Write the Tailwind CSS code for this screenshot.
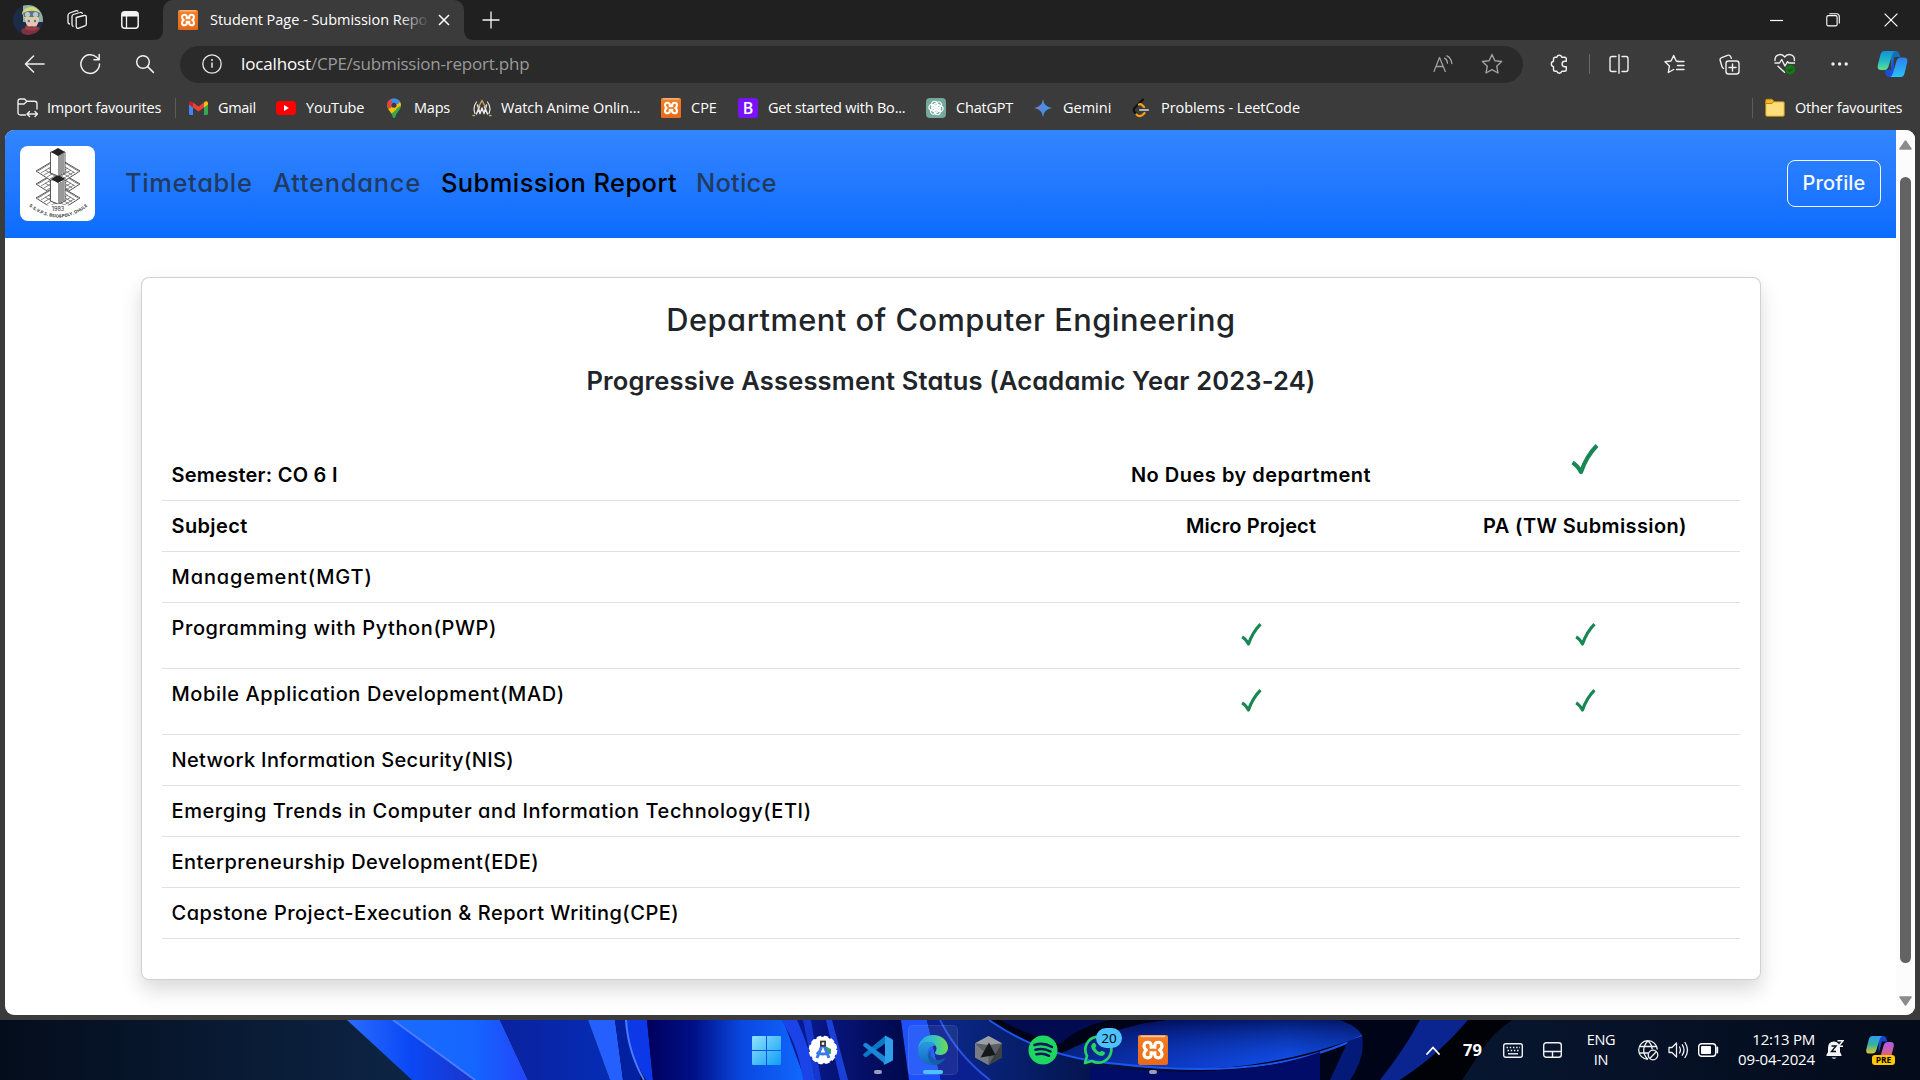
<!DOCTYPE html>
<html lang="en">
<head>
<meta charset="utf-8">
<title>Student Page - Submission Report</title>
<script src="https://cdn.jsdelivr.net/npm/@tailwindcss/browser@4"></script>
</head>
<body class="w-[1920px] h-[1080px] overflow-hidden bg-[#3b3b3b] font-['Open_Sans',sans-serif] text-[14.5px] text-white">

<svg class="absolute w-0 h-0">
  <defs>
    <linearGradient id="xg" x1="0" y1="0" x2="0" y2="1"><stop offset="0" stop-color="#f08a3c"/><stop offset=".2" stop-color="#f27a1e"/><stop offset="1" stop-color="#e8691a"/></linearGradient>
    <linearGradient id="gem" x1="0" y1="0" x2="1" y2="0"><stop offset="0" stop-color="#7f7fd0"/><stop offset=".5" stop-color="#4d8be0"/><stop offset="1" stop-color="#3a9bf0"/></linearGradient>
    <linearGradient id="cpA" x1="0" y1="0" x2="0" y2="1"><stop offset="0" stop-color="#1392d8"/><stop offset=".5" stop-color="#22b5c8"/><stop offset="1" stop-color="#5fe08a"/></linearGradient>
    <linearGradient id="cpB" x1="0" y1="0" x2="0" y2="1"><stop offset="0" stop-color="#2f7df5"/><stop offset="1" stop-color="#28c3f5"/></linearGradient>
    <linearGradient id="preA" x1="0" y1="0" x2="0" y2="1"><stop offset="0" stop-color="#2f9af0"/><stop offset=".5" stop-color="#35b49a"/><stop offset="1" stop-color="#e8c42a"/></linearGradient>
    <linearGradient id="preB" x1="0" y1="0" x2="0" y2="1"><stop offset="0" stop-color="#b05ce8"/><stop offset="1" stop-color="#f0605a"/></linearGradient>
    <linearGradient id="win" x1="0" y1="0" x2="29" y2="29" gradientUnits="userSpaceOnUse"><stop offset="0" stop-color="#8fe3fb"/><stop offset="1" stop-color="#0f9cf5"/></linearGradient>
    <linearGradient id="edA" x1="0" y1="0" x2="1" y2="0"><stop offset="0" stop-color="#2ba5e4"/><stop offset=".5" stop-color="#35c1c9"/><stop offset="1" stop-color="#6fdc4a"/></linearGradient>
    <linearGradient id="edB" x1="0" y1="0" x2="0" y2="1"><stop offset="0" stop-color="#2a9be0"/><stop offset="1" stop-color="#1268c0"/></linearGradient>
    <symbol id="xampp" viewBox="0 0 20 20"><rect width="20" height="20" rx="1.500" fill="url(#xg)"/><path d="M2 .9h16" stroke="#fbc79b" stroke-width="1"/><path d="M8.800 10V7.200Q8.800 4.800 6.500 4.800T4 7.100Q4 9 5.700 10 4 11 4 12.900q0 2.300 2.500 2.300t2.300-2.400zM11.200 10V7.200q0-2.400 2.300-2.400T16 7.100Q16 9 14.300 10q1.700 1 1.700 2.900 0 2.300-2.500 2.300t-2.300-2.400z" fill="#f27a1e" stroke="#fff" stroke-width="2.100" stroke-linejoin="round"/><path d="M7 10h6" stroke="#f27a1e" stroke-width="1.600"/><path d="M9 7.700h2M9 12.300h2" stroke="#fff" stroke-width="1.800"/></symbol>
    <symbol id="tick" viewBox="0 0 28 32"><path d="M1.500 18.500q4.500 2.500 8.500 9.500 5.500-16 16-26.500" fill="none" stroke="#198754" stroke-width="4.200" stroke-linejoin="round"/></symbol>
  </defs>
</svg>

<!-- Tab strip -->
<header class="flex h-[40px] bg-[#202020]">
  <div class="flex items-center w-[163px] pl-[13px]">
    <svg class="size-[30px]" viewBox="0 0 30 30"><clipPath id="av"><circle cx="15" cy="15" r="15"/></clipPath><g clip-path="url(#av)"><rect width="30" height="30" fill="#1c2b46"/><path d="M10 0h20v17H10z" fill="#8fb0a5"/><path d="M9 8c2-7 15-9 18 0l-2 5H11z" fill="#d5d878"/><path d="M10 8c6-3 12-3 17 0l-1 4H11z" fill="#5b7587"/><circle cx="14.500" cy="9.500" r="2.600" fill="#b9c9d2"/><circle cx="22.500" cy="9.500" r="2.600" fill="#b9c9d2"/><path d="M12 13h14c0 6-3 10-7 10s-7-4-7-10z" fill="#e9c4b0"/><circle cx="15.800" cy="16" r="1.200" fill="#3c7fb5"/><circle cx="22" cy="16" r="1.200" fill="#3c7fb5"/><path d="M8 25c6-5 14-4 20-2l-3 7H10z" fill="#7d3040"/><path d="M13 20q5 5 11 1l1 3q-7 3-13 0z" fill="#9a4048"/></g></svg>
    <svg class="size-[22px] ml-[23px]" viewBox="0 0 22 22" fill="none" stroke="#f2f2f2" stroke-width="1.300" stroke-linejoin="round"><path d="M10.200 8.500 18 6.500q2.300-.5 2.300 1.600v6.800q0 1.600-1.500 2l-6 2.200q-2.300.8-2.600-1.600z"/><path d="M7.500 17.500q-1.500-.3-1.500-2V7.500q0-1.500 1.400-2l6.600-2q1.800-.6 2.600 1.200"/><path d="M4 15Q2 15 2 13V6.500Q2 4.700 3.700 4l6-2.200q1.600-.6 2.600.6"/></svg>
    <svg class="size-[18px] ml-[33px]" viewBox="0 0 18 18"><rect x=".8" y=".8" width="16.400" height="16.400" rx="3" fill="none" stroke="#f2f2f2" stroke-width="1.500"/><path d="M1 5.500V3.500Q1 1 3.500 1h11Q17 1 17 3.500v2z" fill="#f2f2f2"/><path d="M5.500 5v12" stroke="#f2f2f2" stroke-width="1.300"/></svg>
  </div>
  <div class="relative flex items-center w-[301px] pl-[15px] rounded-t-[10px] bg-[#3b3b3b]">
    <svg class="absolute -left-[10px] bottom-0 size-[10px]" viewBox="0 0 10 10"><path d="M10 0v10H0Q10 10 10 0z" fill="#3b3b3b"/></svg>
    <svg class="absolute -right-[10px] bottom-0 size-[10px]" viewBox="0 0 10 10"><path d="M0 0v10h10Q0 10 0 0z" fill="#3b3b3b"/></svg>
    <svg class="size-[20px]"><use href="#xampp"/></svg>
    <div class="relative ml-[12px] w-[219px] overflow-hidden whitespace-nowrap tracking-[-0.03px]">Student Page - Submission Repo<span class="absolute inset-y-0 right-0 w-[30px] bg-linear-to-r from-transparent to-[#3b3b3b]"></span></div>
    <svg class="size-[12px] ml-[9px]" viewBox="0 0 12 12" stroke="#fff" stroke-width="1.500"><path d="M1 1l10 10M11 1 1 11"/></svg>
  </div>
  <svg class="size-[18px] ml-[18px] mt-[11px]" viewBox="0 0 18 18" stroke="#f5f5f5" stroke-width="1.300"><path d="M9 .5v17M.5 9h17"/></svg>
  <div class="ml-auto flex items-center pr-[22px] pb-[1px]">
    <svg class="w-[13px] h-[14px]" viewBox="0 0 13 14"><path d="M0 7.500h13" stroke="#fff" stroke-width="1.200"/></svg>
    <svg class="size-[14px] ml-[43px]" viewBox="0 0 14 14" fill="none" stroke="#fff" stroke-width="1.100"><rect x=".8" y="2.600" width="10.300" height="10.300" rx="1.500"/><path d="M3.300.7h7.200Q13.300.8 13.300 3.500v7"/></svg>
    <svg class="size-[14px] ml-[44px]" viewBox="0 0 14 14" stroke="#fff" stroke-width="1.200"><path d="M.6.6l12.800 12.800M13.400.6.6 13.400"/></svg>
  </div>
</header>

<!-- Address bar -->
<div class="flex items-center h-[47px] pt-[1px]">
  <div class="flex items-center w-[180px] pl-[24px]">
    <svg class="w-[21px] h-[18px]" viewBox="0 0 21 18" fill="none" stroke="#f0f0f0" stroke-width="1.500" stroke-linecap="round" stroke-linejoin="round"><path d="M20 9H1.500M9.500 1 1.500 9l8 8"/></svg>
    <svg class="size-[22px] ml-[34px]" viewBox="0 0 22 22" fill="none" stroke="#f0f0f0" stroke-width="1.500" stroke-linecap="round" stroke-linejoin="round"><path d="M20.500 11a9.300 9.300 0 1 1-2.900-6.700L20 6.500M20.200 1.500v5.300h-5.300"/></svg>
    <svg class="size-[20px] ml-[34px]" viewBox="0 0 20 20" fill="none" stroke="#f0f0f0" stroke-width="1.500" stroke-linecap="round"><circle cx="8" cy="8" r="6.300"/><path d="m12.600 12.600 5.800 5.800"/></svg>
  </div>
  <div class="flex items-center w-[1343px] h-[37px] rounded-full bg-[#2a2a2a] pl-[22px] pr-[20px]">
    <svg class="size-[20px]" viewBox="0 0 20 20"><circle cx="10" cy="10" r="9.200" fill="none" stroke="#e8e8e8" stroke-width="1.300"/><path d="M10 8.500v5.300" stroke="#e8e8e8" stroke-width="1.500"/><circle cx="10" cy="6" r="1" fill="#e8e8e8"/></svg>
    <div class="ml-[19px] text-[17px] tracking-[-0.15px]">localhost<span class="text-[#9a9a9a] tracking-[-0.22px]">/CPE/submission-report.php</span></div>
    <svg class="ml-auto w-[20px] h-[18px]" viewBox="0 0 20 18" fill="none" stroke="#a0a0a0" stroke-width="1.300" stroke-linecap="round" stroke-linejoin="round"><path d="M1 16.500 6.500 2.500l5.800 14M3 11.500h7.300"/><path d="M11.500 3.200q2.800 1.300 3 5M14 .8q4.300 2 4.800 7.700"/></svg>
    <svg class="ml-[28px] size-[22px]" viewBox="0 0 22 22" fill="none" stroke="#a0a0a0" stroke-width="1.400" stroke-linejoin="round"><path d="m11 1.500 2.900 6.200 6.700.8-4.900 4.700 1.300 6.800-6-3.400-6 3.400 1.300-6.800L1.400 8.500l6.700-.8z"/></svg>
  </div>
  <div class="flex items-center ml-[26px]">
    <svg class="size-[20px]" viewBox="0 0 20 20" fill="none" stroke="#f0f0f0" stroke-width="1.400" stroke-linejoin="round"><path d="M4.500 5q0-1.800 1.800-1.800h1.500a2.600 2.600 0 0 1 5 0h2.700q1.800 0 1.800 1.800v2.300h-1.500a2.700 2.700 0 0 0 0 5.400h1.500V15.500q0 1.800-1.800 1.800h-2.700a2.600 2.600 0 0 1-5 0H6.300q-1.800 0-1.800-1.800v-2.900a2.700 2.700 0 0 1 0-5.300z"/></svg>
    <div class="ml-[20px] w-[1px] h-[20px] bg-[#6a6a6a]"></div>
    <svg class="ml-[19px] size-[20px]" viewBox="0 0 20 20" fill="none" stroke="#f0f0f0" stroke-width="1.400" stroke-linecap="round"><path d="M10 .8v18.400M7 2.500H3Q1 2.500 1 4.500v11q0 2 2 2h4M13 2.500h4q2 0 2 2v11q0 2-2 2h-4"/></svg>
    <svg class="ml-[35px] size-[21px]" viewBox="0 0 21 21" fill="none" stroke="#f0f0f0" stroke-width="1.400" stroke-linecap="round" stroke-linejoin="round"><path d="M15.500 7.500 12.200 7 9.700 1.500 7 7 1 7.800l4.400 4.300L4.300 18.500l5.400-3M13 7.500h7M13.500 11.500H20M12.500 15.500H20"/></svg>
    <svg class="ml-[34px] size-[21px]" viewBox="0 0 21 21" fill="none" stroke="#f0f0f0" stroke-width="1.400" stroke-linecap="round" stroke-linejoin="round"><rect x="7" y="7" width="13" height="13" rx="2.500"/><path d="M13.500 10v7M10 13.500h7M4.500 14.500Q3.300 13.800 2.800 12L1.200 6.500Q.6 4.300 2.700 3.600L8.500 1.300q2.300-.8 3.300 1.700l.5 1.300"/></svg>
    <svg class="ml-[34px] w-[22px] h-[22px]" viewBox="0 0 22 22" fill="none" stroke="#f0f0f0" stroke-width="1.400" stroke-linecap="round" stroke-linejoin="round"><path d="M1 7.500C.5 1.500 7.500-.5 10.700 4 14-.5 21 1.500 20.400 7.500M1 10h4.500l2.200-3.500 3.200 6.500 2.700-4.300L15 10h5.500M4 13.300l6.500 6"/><circle cx="16.300" cy="16.700" r="4.800" fill="#107c10" stroke="none"/><path d="m14.300 16.800 1.500 1.500 2.600-2.700" stroke="#3b3b3b" stroke-width="1.200"/></svg>
    <svg class="ml-[35px] w-[18px] h-[4px]" viewBox="0 0 18 4" fill="#f0f0f0"><circle cx="2" cy="2" r="1.700"/><circle cx="8.600" cy="2" r="1.700"/><circle cx="15.200" cy="2" r="1.700"/></svg>
    <svg class="ml-[28px] w-[31px] h-[28px]" viewBox="0 0 31 28"><path d="M14 1h5q2.500 0 3.300 2.500L23.500 7h-6L14 20z" fill="#1470b8"/><path d="M17 27h-5q-2.500 0-3.300-3L7.500 20h6L17 8z" fill="#1c4fd8"/><path d="M7.500 1H18q-2 .5-3 4l-3.500 11.500Q10.500 20 7 20H4Q0 20 .7 15.500L3.500 4.500Q4.500 1 7.500 1z" fill="url(#cpA)"/><path d="M23.500 27H13q2-.5 3-4l3.500-12Q20.500 7.500 24 7.500h3q4 0 3.300 4.500l-2.800 11.500Q26.500 27 23.500 27z" fill="url(#cpB)"/></svg>
  </div>
</div>

<!-- Favourites bar -->
<nav class="flex items-center h-[43px] pl-[17px] pb-[2px] whitespace-nowrap">
  <div class="flex items-center gap-[9px] w-[158px] shrink-0">
    <svg class="size-[21px]" viewBox="0 0 21 21" fill="none" stroke="#ececec" stroke-width="1.400" stroke-linecap="round" stroke-linejoin="round"><path d="M8.500 18H3.500Q1 18 1 15.500v-11Q1 2 3.500 2h4L10 4.300h7.500q2.500 0 2.500 2.500V12M1 7h6L10 4.300M10.500 17h9.500M12.500 14.500 10 17l2.500 2.500M18 14.500l2.500 2.500-2.500 2.500"/></svg>
    <span class="tracking-[-0.2px]">Import favourites</span>
  </div>
  <div class="w-[14px] shrink-0"><div class="w-[1px] h-[20px] bg-[#5c5c5c]"></div></div>
  <div class="flex items-center gap-[9px] w-[87px] shrink-0">
    <svg class="size-[20px]" viewBox="0 0 20 20"><path d="M0 5v10.500Q0 17 1.500 17H4V8z" fill="#4285f4"/><path d="M19 5v10.500q0 1.500-1.500 1.500H15V8z" fill="#34a853"/><path d="M4 4.500v5l5.500 4 5.500-4v-5l-5.500 4z" fill="#ea4335"/><path d="M0 5q.3-2.500 2.800-1.400L4 4.500v5L0 6.500z" fill="#c5221f"/><path d="M19 5q-.3-2.500-2.800-1.400L15 4.500v5l4-3z" fill="#fbbc04"/></svg>
    <span class="tracking-[-0.3px]">Gmail</span>
  </div>
  <div class="flex items-center gap-[10px] w-[108px] shrink-0">
    <svg class="size-[20px]" viewBox="0 0 20 20"><rect y="3" width="20" height="14" rx="3.500" fill="#f00"/><path d="M8 7v6l5-3z" fill="#fff"/></svg>
    <span class="tracking-[-0.2px]">YouTube</span>
  </div>
  <div class="flex items-center gap-[10px] w-[88px] shrink-0">
    <svg class="size-[20px]" viewBox="0 0 20 20"><clipPath id="pin"><path d="M10 .5c4 0 7 3 7 6.800 0 4.700-4.500 5.700-6 12.200q-1 1-2 0C7.500 13 3 12 3 7.300 3 3.500 6 .5 10 .5z"/></clipPath><g clip-path="url(#pin)"><rect width="20" height="20" fill="#34a853"/><path d="M3 12 17 3v5L7 16z" fill="#fbbc04"/><path d="M9 8 17 3V-2H5z" fill="#4285f4"/><path d="M0 0h6l4 7-7 5z" fill="#ea4335"/><path d="M12 0 6 7l8-1 4-4z" fill="#4285f4"/><path d="M12 20l6-13-5 3-5 9z" fill="#34a853"/></g><circle cx="10" cy="7.200" r="2.500" fill="#3b3b3b"/></svg>
    <span class="tracking-[-0.2px]">Maps</span>
  </div>
  <div class="flex items-center gap-[9px] w-[189px] shrink-0">
    <svg class="size-[20px]" viewBox="0 0 20 20" fill="none" stroke-linejoin="round" stroke-linecap="round"><path d="M4.500 4Q.5 9 3 15.500M15.500 4q4 5 1.500 11.500" stroke="#e8e8e8" stroke-width="1.200"/><path d="m4.500 16 3-7.500M15.500 16l-3-7.500M5.500 7 8 15.500 10 10l2 5.500L14.500 7" stroke="#e8e8e8" stroke-width="1.500"/><path d="M6.500 9 10 2.500 13.500 9" stroke="#c9a45c" stroke-width="1.500"/><path d="M1 17.500h1.500M17.500 17.500H19" stroke="#c9a45c" stroke-width="1.500"/></svg>
    <span class="tracking-[-0.1px]">Watch Anime Onlin...</span>
  </div>
  <div class="flex items-center gap-[10px] w-[77px] shrink-0">
    <svg class="size-[20px]"><use href="#xampp"/></svg>
    <span>CPE</span>
  </div>
  <div class="flex items-center gap-[10px] w-[188px] shrink-0">
    <span class="flex items-center justify-center size-[20px] rounded-[3px] bg-[#7a12f8] text-[16px] font-semibold leading-none">B</span>
    <span class="tracking-[-0.2px]">Get started with Bo...</span>
  </div>
  <div class="flex items-center gap-[10px] w-[106px] shrink-0">
    <svg class="size-[20px]" viewBox="0 0 20 20"><rect width="20" height="20" rx="4" fill="#74aa9c"/><g fill="none" stroke="#fff" stroke-width="1.100"><rect id="pt" x="5.700" y="3.200" width="5.500" height="9.500" rx="2.700"/><use href="#pt" transform="rotate(60 10 10)"/><use href="#pt" transform="rotate(120 10 10)"/><use href="#pt" transform="rotate(180 10 10)"/><use href="#pt" transform="rotate(240 10 10)"/><use href="#pt" transform="rotate(300 10 10)"/></g></svg>
    <span class="tracking-[-0.2px]">ChatGPT</span>
  </div>
  <div class="flex items-center gap-[10px] w-[99px] shrink-0 pl-[1px]">
    <svg class="size-[20px]" viewBox="0 0 20 20"><path d="M10 1q1 8 9 9-8 1-9 9-1-8-9-9 8-1 9-9z" fill="url(#gem)"/></svg>
    <span>Gemini</span>
  </div>
  <div class="flex items-center gap-[10px] shrink-0">
    <svg class="size-[20px]" viewBox="0 0 20 20" fill="none" stroke-linecap="round" stroke-linejoin="round" stroke-width="2.200"><path d="M12 1.500 3.500 10q-1.500 2 0 4l2 2.500" stroke="#111"/><path d="M8 6.500q1.500-.8 3 .5l2 2M5.500 16.500q3 3 6 .5l2-2" stroke="#ffa116"/><path d="M9 12h8" stroke="#b3b3b3"/></svg>
    <span class="tracking-[-0.08px]">Problems - LeetCode</span>
  </div>
  <div class="ml-auto flex items-center w-[168px] shrink-0">
    <div class="w-[1px] h-[20px] bg-[#5c5c5c]"></div>
    <svg class="ml-[12px] size-[20px]" viewBox="0 0 20 20"><path d="M.7 4V17q0 1.300 1.300 1.300h16q1.300 0 1.300-1.300V5q0-1.300-1.300-1.300H9z" fill="#ffdc7c" stroke="#b8860b" stroke-width="1"/><path d="M.7 5.500V2.500Q.7 1.200 2 1.200h5l2 2-2 2.300z" fill="#f5b92a" stroke="#b8860b" stroke-width="1"/></svg>
    <span class="ml-[10px] tracking-[-0.22px]">Other favourites</span>
  </div>
</nav>

<!-- Page viewport -->
<main class="flex w-[1910px] h-[885px] ml-[5px] rounded-[9px] overflow-hidden bg-white font-['Inter',sans-serif] [font-feature-settings:'cv11']">
  <div class="w-[1891px]">
    <div class="flex items-center h-[108px] pl-[15px] pr-[15px] pb-[2px] bg-linear-to-b from-[#3385ff] to-[#0a6cff]">
      <svg class="size-[75px] rounded-[8px] bg-white" viewBox="0 0 75 75">
        <g id="tier"><path d="M16 38 38 25l22 13-22 14z" fill="#fff" stroke="#555" stroke-width="1"/><path d="M18 38l18-11M21 40l18-11M24 42l18-11M27 44l18-11M30 46l18-11M33 48l18-11M36 50l18-11M58 38 40 27M55 40 37 29M52 42 34 31M49 44 31 33M46 46 28 35M43 48 25 37" stroke="#666" stroke-width=".8"/></g>
        <use href="#tier" y="14"/>
        <use href="#tier" y="-13"/>
        <path d="M30.500 34h14.500v21l-7 3-7.500-3z" fill="#fff" stroke="#333" stroke-width=".8"/><path d="M39 37v20M41 36v20M43 35v20" stroke="#333" stroke-width="1"/><path d="m31 33 7-4 7 4-7 4z" fill="#222"/>
        <path d="M30.500 6H45v21l-7 3-7.500-3z" fill="#fff" stroke="#333" stroke-width=".8"/><path d="M39 9v20M41 8v20M43 7v20" stroke="#333" stroke-width="1"/><path d="m31 6 7-4 7 4-7 4z" fill="#222"/>
        <path d="M10 62 38 58l28 4v13H10z" fill="#fff"/>
        <text x="38" y="65" font-size="5.500" text-anchor="middle" fill="#222">1983</text>
        <path id="arc" d="M9 60Q38 83 68 60" fill="none"/>
        <text font-size="4.200" font-weight="700" fill="#333"><textPath href="#arc" textLength="64">S.S.V.P.S. BSIO&amp;POLY. DHULE</textPath></text>
      </svg>
      <div class="flex items-center text-[25.5px] font-medium leading-[30px] text-[#212529]/75 whitespace-nowrap">
        <a class="ml-[30px] w-[148px] tracking-[0.6px]">Timetable</a>
        <a class="w-[168px] tracking-[0.72px]">Attendance</a>
        <a class="w-[255px] tracking-[0.4px] text-black">Submission Report</a>
        <a class="tracking-[0.2px]">Notice</a>
      </div>
      <button class="ml-auto w-[94px] h-[47px] rounded-[8px] border border-[#f8f9fa] text-[20px] font-medium text-[#f8f9fa] tracking-[0.2px]">Profile</button>
    </div>

    <section class="ml-[136px] mt-[39px] w-[1620px] h-[703px] rounded-[8px] border border-black/[.18] bg-white shadow-[0_10px_20px_rgba(0,0,0,.15)] pt-[24px] px-[20px] text-center text-[#212529]">
      <h1 class="text-[30.8px] leading-[36px] font-medium tracking-[0.47px]">Department of Computer Engineering</h1>
      <h2 class="mt-[28px] text-[25.5px] leading-[30px] font-semibold tracking-[0.17px]">Progressive Assessment Status (Acadamic Year 2023-24)</h2>
      <table class="mt-[34px] w-[1578px] table-fixed border-separate border-spacing-0 text-[20px] leading-[30px] text-black [&_td]:border-b [&_td]:border-[#dee2e6] [&_td]:align-top [&_td]:pt-[10px] [&_th]:border-b [&_th]:border-[#dee2e6] [&_th]:align-top [&_th]:pt-[10px] [&_th]:font-semibold [&_td]:font-medium [&_tr>:first-child]:text-left [&_tr>:first-child]:pl-[9.500px]">
        <colgroup><col class="w-[910px]"><col class="w-[358px]"><col class="w-[310px]"></colgroup>
        <tr class="h-[71px]">
          <th class="pt-[30px]! tracking-[0.25px]">Semester: CO 6 I</th>
          <th class="pt-[30px]! tracking-[0.5px]">No Dues by department</th>
          <th class="pt-[14px]!"><svg class="mx-auto w-[28px] h-[32px]"><use href="#tick"/></svg></th>
        </tr>
        <tr class="h-[51px]"><th class="tracking-[0.38px]">Subject</th><th class="tracking-[0.14px]">Micro Project</th><th class="tracking-[0.38px]">PA (TW Submission)</th></tr>
        <tr class="h-[51px]"><td class="tracking-[0.88px]">Management(MGT)</td><td></td><td></td></tr>
        <tr class="h-[66px]"><td class="tracking-[0.6px]">Programming with Python(PWP)</td>
          <td class="pt-[20px]!"><svg class="mx-auto w-[21px] h-[24px]"><use href="#tick"/></svg></td>
          <td class="pt-[20px]!"><svg class="mx-auto w-[21px] h-[24px]"><use href="#tick"/></svg></td></tr>
        <tr class="h-[66px]"><td class="tracking-[0.6px]">Mobile Application Development(MAD)</td>
          <td class="pt-[20px]!"><svg class="mx-auto w-[21px] h-[24px]"><use href="#tick"/></svg></td>
          <td class="pt-[20px]!"><svg class="mx-auto w-[21px] h-[24px]"><use href="#tick"/></svg></td></tr>
        <tr class="h-[51px]"><td class="tracking-[0.34px]">Network Information Security(NIS)</td><td></td><td></td></tr>
        <tr class="h-[51px]"><td class="tracking-[0.58px]">Emerging Trends in Computer and Information Technology(ETI)</td><td></td><td></td></tr>
        <tr class="h-[51px]"><td class="tracking-[0.51px]">Enterpreneurship Development(EDE)</td><td></td><td></td></tr>
        <tr class="h-[51px]"><td class="tracking-[0.49px]">Capstone Project-Execution &amp; Report Writing(CPE)</td><td></td><td></td></tr>
      </table>
    </section>
  </div>
  <!-- Scrollbar -->
  <div class="flex flex-col items-center w-[19px] bg-[#fcfcfc] pt-[10px] pb-[9px]">
    <svg class="w-[13px] h-[10px]" viewBox="0 0 13 10"><path d="M6.500 1 12 9H1z" fill="#8b8b8b" stroke="#8b8b8b" stroke-width="1.500" stroke-linejoin="round"/></svg>
    <div class="mt-[27px] w-[11px] h-[786px] rounded-full bg-[#636363]"></div>
    <svg class="mt-auto w-[13px] h-[10px]" viewBox="0 0 13 10"><path d="M6.500 9 12 1H1z" fill="#8b8b8b" stroke="#8b8b8b" stroke-width="1.500" stroke-linejoin="round"/></svg>
  </div>
</main>

<!-- Taskbar -->
<footer class="relative mt-[5px] flex items-center h-[60px] w-[1920px]">
  <svg class="absolute inset-0 w-[1920px] h-[60px]" viewBox="0 0 1920 60">
    <defs>
      <linearGradient id="b0" x1="0" x2="1" y1="0" y2="0"><stop offset="0" stop-color="#040d1c"/><stop offset="1" stop-color="#0d2546"/></linearGradient>
      <linearGradient id="b1" x1="0" x2="1" y1="0" y2="0"><stop offset="0" stop-color="#2a6cff"/><stop offset=".5" stop-color="#0a48f5"/><stop offset="1" stop-color="#1c34c8"/></linearGradient>
      <linearGradient id="b2" x1="0" x2="1" y1="0" y2="0"><stop offset="0" stop-color="#1a6cff"/><stop offset=".6" stop-color="#1466ff"/><stop offset="1" stop-color="#2444f8"/></linearGradient>
      <linearGradient id="b3" x1="0" x2="1" y1="0" y2="0"><stop offset="0" stop-color="#0a22a0"/><stop offset="1" stop-color="#052cb4"/></linearGradient>
      <linearGradient id="b4" x1="0" x2="1" y1="0" y2="0"><stop offset="0" stop-color="#00005c"/><stop offset=".3" stop-color="#001088"/><stop offset=".6" stop-color="#0a48e0"/><stop offset="1" stop-color="#1068ff"/></linearGradient>
      <linearGradient id="b5" x1="0" x2="1" y1="0" y2="0"><stop offset="0" stop-color="#0a1c9a"/><stop offset="1" stop-color="#000848"/></linearGradient>
      <linearGradient id="b6" x1="0" x2="1" y1="0" y2="0"><stop offset="0" stop-color="#000a4a"/><stop offset=".35" stop-color="#0628a8"/><stop offset=".75" stop-color="#0d4ce8"/><stop offset="1" stop-color="#0a38b8"/></linearGradient>
      <linearGradient id="b7" x1="0" x2="0" y1="0" y2="1"><stop offset="0" stop-color="#000640" stop-opacity=".7"/><stop offset="1" stop-color="#1a5cff" stop-opacity=".3"/></linearGradient>
      <linearGradient id="b8" x1="0" x2="1" y1="0" y2="0"><stop offset="0" stop-color="#071630"/><stop offset="1" stop-color="#040b1a"/></linearGradient>
      <linearGradient id="b9" x1="0" x2="1" y1="0" y2="0"><stop offset="0" stop-color="#0a2a90"/><stop offset="1" stop-color="#000620"/></linearGradient>
    </defs>
    <rect width="1920" height="60" fill="#000418"/>
    <rect width="420" height="60" fill="url(#b0)"/>
    <path d="M347 0h46l82 60h-63z" fill="url(#b1)"/>
    <path d="M393 0h107l28 60h-53z" fill="url(#b2)"/><path d="M393 0l82 60" stroke="#4c7cff" stroke-width="2"/>
    <path d="M500 0h88l22 60h-82z" fill="url(#b3)"/>
    <path d="M588 0h27l8 60h-13z" fill="#2560ff"/><path d="M615 0h14l12 60h-18z" fill="#0220a0"/>
    <path d="M626 0h21l6 60h-7q-18-28-20-60z" fill="#0c38e8"/><path d="M626 0q2 32 18 60" fill="none" stroke="#4a7cff" stroke-width="2"/>
    <path d="M647 0h136q18 30 22 60H653z" fill="url(#b4)"/>
    <path d="M783 0h118l9 60H805z" fill="url(#b5)"/>
    <path d="M781 0h16q14 30 18 60h-12q-5-36-22-60z" fill="#1a44e8"/><path d="M803 0h8l10 60h-6z" fill="#1438d0"/><path d="M826 0h6l16 60h-8z" fill="#1a40d8"/>
    <path d="M901 0h26l14 60h-32z" fill="#1c52f8"/>
    <path d="M927 0h62q50 35 111 42l100 6v12H941z" fill="url(#b9)"/>
    <path d="M940 0q18 36 50 60h-49L927 0z" fill="#0a1f90"/><path d="M940 0q18 36 50 60" fill="none" stroke="#2a50e0" stroke-width="2"/>
    <path d="M989 0h211v48q-150 0-211-48z" fill="#000318"/>
    <path d="M1000 0h110q-30 6-50 24-30-8-60-24z" fill="#020a50"/>
    <path d="M1060 34q60-30 110-34h168q20 6 24 16-90 34-180 33-60 0-122-15z" fill="url(#b6)"/><path d="M1060 34q60-30 110-34h168q20 6 24 16-90 34-180 33-60 0-122-15z" fill="url(#b7)"/>
    <path d="M989 0q54 38 130 44 150 18 243-28" fill="none" stroke="#1c56f0" stroke-width="2"/>
    <path d="M1090 46q150 16 230-14v28H1090z" fill="#000c68"/>
    <path d="M1350 60q16-24 12-44l-14 5-18 39z" fill="#041a78"/>
    <path d="M1420 0h48q-28 34-68 60h-20q24-30 40-60z" fill="#0a2590"/>
    <path d="M1468 0h44q-20 14-30 30l-20 30h-62q40-26 68-60z" fill="#000208"/>
    <path d="M1512 0h408v60h-458l20-30q10-16 30-30z" fill="url(#b8)"/>
  </svg>

  <div class="relative flex items-center h-full ml-[752px]">
    <svg class="size-[29px]" viewBox="0 0 29 29"><path d="M1 0h13v14H0V1q0-1 1-1zM15 0h13q1 0 1 1v13H15zM0 15h14v14H1q-1 0-1-1zM15 15h14v13q0 1-1 1H15z" fill="url(#win)"/></svg>
    <svg class="ml-[27px] size-[30px]" viewBox="0 0 30 30"><circle cx="15" cy="15" r="13.300" fill="#fff" stroke="#fff" stroke-width="2" stroke-dasharray="4.500 2.500"/><path d="M17 11l6 3v5l-4-2z" fill="#34a853"/><path d="M9 23 14 10.500h2L21 23M8.500 17.500q6.500 3 13 0" fill="none" stroke="#3b78e8" stroke-width="3"/><rect x="12.900" y="6.500" width="4.200" height="4.200" fill="#fff" stroke="#333" stroke-width="1.700"/></svg>
    <svg class="ml-[25px] size-[30px]" viewBox="0 0 30 30"><path d="M22 1v7.500L3.500 22q-1 .6-1.800-.2L.4 20.500q-.7-.8 0-1.600z" fill="#0c78c4"/><path d="M22 29v-7.500L3.500 8q-1-.6-1.800.2L.4 9.500q-.7.800 0 1.600z" fill="#1a86d4"/><path d="M22 .5 29 4q1 .5 1 1.600v18.800q0 1.100-1 1.600l-7 3.500q-1 .4-1.600-.5L22 27z" fill="#2c9fe8"/></svg>
    <div class="ml-[15px] flex items-center justify-center size-[50px] rounded-[5px] bg-white/[.07] border border-white/[.08]">
      <svg class="size-[30px]" viewBox="0 0 30 30"><path d="M0 15C0 6 7 0 15 0c9 0 15 6 15 12.500 0 5-4 7.500-8 7.500-3.500 0-5-1.300-5-2.300 0-.9 1.500-1.500 1.500-4.200C18.500 10 15 7 10.500 7 5 7 1 10 0 15z" fill="url(#edA)"/><path d="M0 15c1-5 5-8 10.500-8 3.500 0 6.500 1.500 7.500 4-5-1-8.500 3-8.500 8 0 5 3.500 9.500 9 10.500Q16.500 30 15 30 1 29.500 0 15z" fill="url(#edB)"/><path d="M13 15.500c-2 8 6 12 14.500 7.500C25 27 21.500 29.500 18 29.700 9 28.500 8 18 13 15.500z" fill="#125fa8"/></svg>
    </div>
    <svg class="ml-[16px] size-[29px]" viewBox="0 0 29 29"><path d="M14.500 0 28 7.200v14.300L14.500 29 1 21.500V7.200z" fill="#5a5f64"/><path d="M14.500 0 28 7.200 14.500 9 1 7.200z" fill="#9a9fa4"/><path d="M1 7.200v14.300L14.500 29V20z" fill="#777c82"/><path d="M28 7.200v14.300L14.500 29z" fill="#3c4044"/><path d="M15 6.500 21.500 19 6.500 21.500z" fill="#15181b"/></svg>
    <svg class="ml-[25px] size-[30px]" viewBox="0 0 30 30"><circle cx="15" cy="15" r="14.500" fill="#1ed760"/><path d="M6.500 10q9-3 17.500 2M7.500 14.800q8-2.300 15 1.700M8.500 19.300q6.500-1.800 12.500 1.500" fill="none" stroke="#081858" stroke-width="2.500" stroke-linecap="round"/></svg>
    <div class="relative ml-[25px]">
      <svg class="size-[30px]" viewBox="0 0 30 30"><path d="M2 28l2-7A13 13 0 1 1 9 26z" fill="none" stroke="#25d366" stroke-width="2.700" stroke-linejoin="round"/><path d="M9.500 8.500q1.500-1.500 2.700-.3l1.300 2.800-1.300 2q1.500 3 4.500 4.300l1.800-1.600 3 1.300q1.200 1-.3 2.700-2.500 2.500-7-.2-6-4-6-8.500.3-1.500 1.300-2.500z" fill="#25d366"/></svg>
      <span class="absolute left-[13px] -top-[7px] w-[26px] h-[20px] rounded-full bg-[#4cc2ff] text-black text-[13.500px] leading-[20px] text-center">20</span>
    </div>
    <svg class="ml-[25px] size-[30px]"><use href="#xampp"/></svg>
    <span class="absolute left-[122px] bottom-[6px] w-[8px] h-[4px] rounded-full bg-[#9a9cb8]"></span>
    <span class="absolute left-[171px] bottom-[6px] w-[20px] h-[4px] rounded-full bg-[#4cc2ff]"></span>
    <span class="absolute left-[397px] bottom-[6px] w-[8px] h-[4px] rounded-full bg-[#9a9cb8]"></span>
  </div>

  <div class="relative flex items-center h-full ml-auto pr-[24px]">
    <svg class="w-[14px] h-[9px]" viewBox="0 0 14 9" fill="none" stroke="#fff" stroke-width="1.800" stroke-linecap="round"><path d="m1 8 6-6.500L13 8"/></svg>
    <span class="ml-[23px] w-[20px] text-[16.500px] font-bold">79</span>
    <svg class="ml-[20px] w-[20px] h-[15px]" viewBox="0 0 20 15"><rect x=".7" y=".7" width="18.600" height="13.600" rx="2" fill="none" stroke="#f0f0f0" stroke-width="1.400"/><path d="M3.500 4.500H17M4.500 7.500H16" stroke="#f0f0f0" stroke-width="1.500" stroke-dasharray="1.500 1.700"/><path d="M5 10.800h10" stroke="#f0f0f0" stroke-width="1.400"/></svg>
    <svg class="ml-[20px] w-[19px] h-[16px]" viewBox="0 0 19 16" fill="none" stroke="#f0f0f0" stroke-width="1.400"><rect x=".7" y=".7" width="17.600" height="14.600" rx="2.500"/><path d="M1 9.500h17M9.500 9.500V15"/></svg>
    <div class="ml-[22px] w-[34px] text-center leading-[20px] tracking-[-0.3px]">ENG<br>IN</div>
    <svg class="ml-[20px] size-[21px]" viewBox="0 0 21 21" fill="none" stroke="#f0f0f0" stroke-width="1.300"><path d="M10 19.300A9.300 9.300 0 1 1 19.300 9.500M10 19.300Q5.500 15 5.700 10T10 .8q4 4 4.300 8.700M1.500 6.500h17M1.500 13h8.500"/><circle cx="15" cy="15" r="4.800"/><path d="m12 18.300 6.300-6.500"/></svg>
    <svg class="ml-[9px] w-[21px] h-[18px]" viewBox="0 0 21 18" fill="none" stroke="#f0f0f0" stroke-width="1.300" stroke-linecap="round" stroke-linejoin="round"><path d="M1 6.500v5h3l4.500 4.500V2L4 6.500zM11.500 6q1.800 3 0 6M14.300 3.800q3.400 5.200 0 10.400M17 1.500q5 7.500 0 15"/></svg>
    <svg class="ml-[9px] w-[21px] h-[14px]" viewBox="0 0 21 14"><rect x=".7" y=".7" width="17" height="12.600" rx="3" fill="none" stroke="#fff" stroke-width="1.400"/><rect x="3" y="3" width="10" height="8" rx="1" fill="#fff"/><path d="M19.300 4.500v5" stroke="#fff" stroke-width="1.800" stroke-linecap="round"/></svg>
    <div class="ml-[16px] w-[80px] text-right text-[15px] leading-[20px] -mt-[2px]"><span class="tracking-[-0.25px]">12:13 PM</span><br><span class="tracking-[-0.13px]">09-04-2024</span></div>
    <svg class="ml-[11px] w-[18px] h-[20px]" viewBox="0 0 18 20"><path d="M8 1.500q-6 0-6 6.500v4L.3 15.200q0 .8.800.8h13.800q.8 0 .7-.8L14 12V8" fill="#f5f5f5"/><path d="M8 1.500q5 0 6 6.500v4H8z" fill="#f5f5f5"/><path d="M5.500 17.500q2.500 2.500 5 0z" fill="#f5f5f5"/><path d="M5.500 6h4.500l-4.500 5.500H10" fill="none" stroke="#061020" stroke-width="1.400"/><path d="M11.500.8h5.500l-4.500 5.400H17" fill="none" stroke="#f5f5f5" stroke-width="1.400"/></svg>
    <div class="relative ml-[21px] w-[31px] h-[30px]">
      <svg class="w-[30px] h-[26px]" viewBox="0 0 31 28"><path d="M14 1h5q2.500 0 3.300 2.500L23.500 7h-6L14 20z" fill="#1a45c8"/><path d="M7.500 1H18q-2 .5-3 4l-3.500 11.500Q10.500 20 7 20H4Q0 20 .7 15.500L3.500 4.500Q4.500 1 7.500 1z" fill="url(#preA)"/><path d="M23.500 27H13q2-.5 3-4l3.500-12Q20.500 7.500 24 7.500h3q4 0 3.300 4.500l-2.800 11.500Q26.500 27 23.500 27z" fill="url(#preB)"/></svg>
      <span class="absolute left-[7px] top-[20px] w-[23px] h-[10px] rounded-[3px] bg-[#ffc800] text-black text-[8.500px] leading-[10px] font-bold text-center">PRE</span>
    </div>
  </div>
</footer>
</body>
</html>
